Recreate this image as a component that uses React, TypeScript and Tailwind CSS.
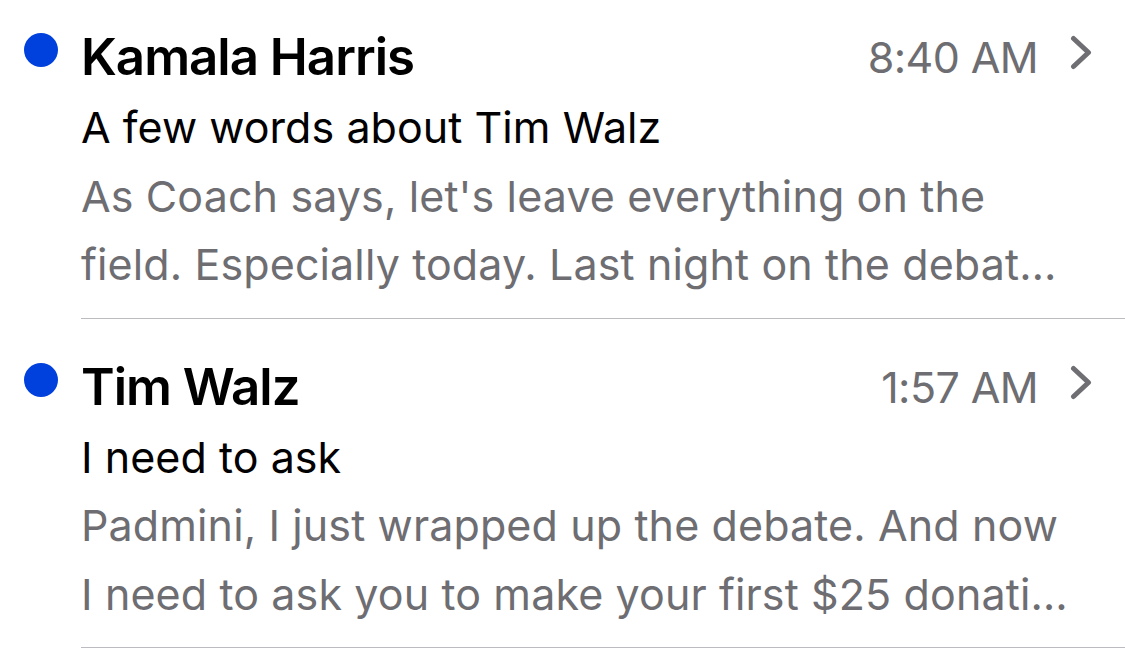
import React from "react";

type Mail = {
  from: string;
  time: string;
  subject: string;
  preview: [string, string];
};

const mails: Mail[] = [
  {
    from: "Kamala Harris",
    time: "8:40 AM",
    subject: "A few words about Tim Walz",
    preview: [
      "As Coach says, let's leave everything on the",
      "field. Especially today. Last night on the debat…",
    ],
  },
  {
    from: "Tim Walz",
    time: "1:57 AM",
    subject: "I need to ask",
    preview: [
      "Padmini, I just wrapped up the debate. And now",
      "I need to ask you to make your first $25 donati…",
    ],
  },
];

function Chevron() {
  return (
    <svg width="22" height="35" viewBox="0 0 22 35" fill="none">
      <path
        d="M3.5 3.5 L18.5 17.5 L3.5 31.5"
        stroke="#6e6e73"
        strokeWidth="5"
        strokeLinecap="round"
        strokeLinejoin="round"
      />
    </svg>
  );
}

function Row({ mail }: { mail: Mail }) {
  return (
    <div className="flex pt-[32px]">
      <div className="w-[81px] shrink-0 pl-[24px] pt-[12px]">
        <div className="h-[34px] w-[34px] rounded-full bg-[#0040dd]" />
      </div>
      <div className="flex-1 border-b border-[#bcbcc0] pb-[19px] pr-[33px]">
        <div className="flex h-[72px] items-start justify-between">
          <div className="text-[51px] leading-[72px] font-semibold text-black tracking-[-1px]">
            {mail.from}
          </div>
          <div className="flex items-start gap-[32px]">
            <div className="text-[43px] leading-[72px] text-[#6d6d72] tracking-[-0.6px]">
              {mail.time}
            </div>
            <div className="pt-[14px]">
              <Chevron />
            </div>
          </div>
        </div>
        <div className="text-[43px] leading-[68.5px] text-black whitespace-nowrap tracking-[0.05px]">
          {mail.subject}
        </div>
        <div className="text-[43px] leading-[68.5px] text-[#6d6d72] whitespace-nowrap tracking-[0.12px]">
          <div>{mail.preview[0]}</div>
          <div>{mail.preview[1]}</div>
        </div>
      </div>
    </div>
  );
}

export default function App() {
  return (
    <div
      className="h-[655px] w-[1125px] overflow-hidden bg-white"
      style={{ fontFamily: "Inter, 'Noto Sans', sans-serif" }}
    >
      <div className="-mt-[11px]">
        {mails.map((m) => (
          <Row key={m.from} mail={m} />
        ))}
      </div>
    </div>
  );
}
